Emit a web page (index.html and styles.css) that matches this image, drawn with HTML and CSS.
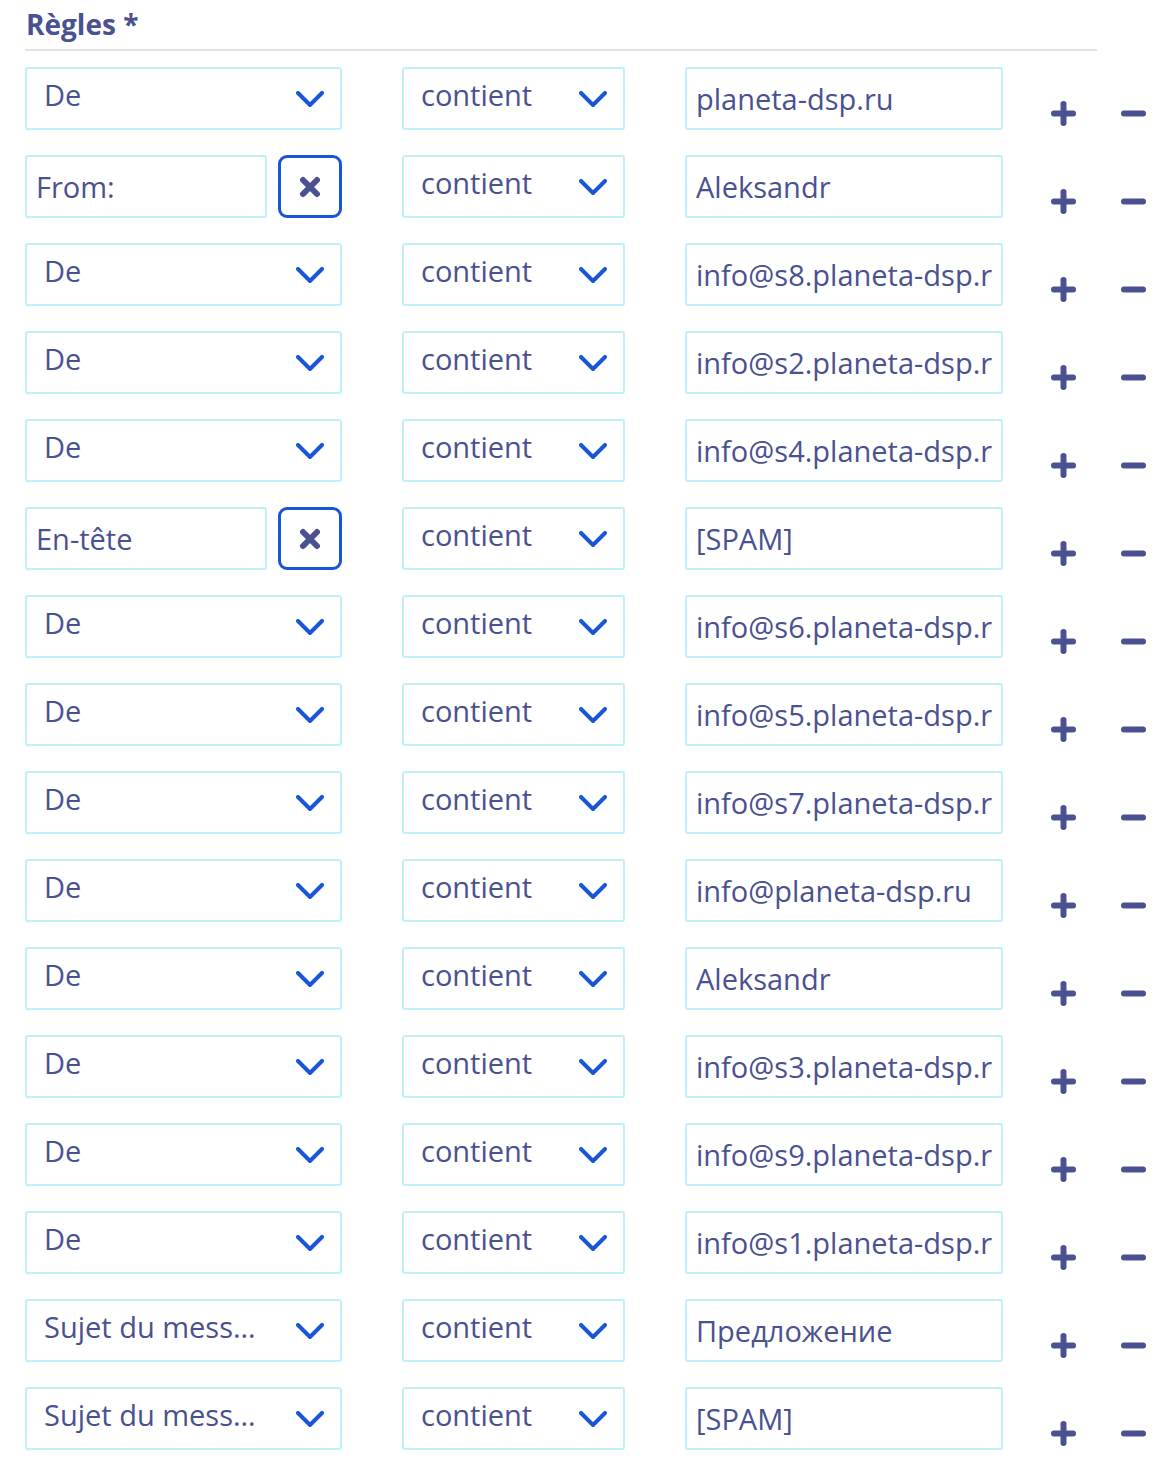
FILE: index.html
```html
<!DOCTYPE html>
<html lang="fr">
<head>
<meta charset="utf-8">
<title>Règles</title>
<link rel="stylesheet" href="styles.css">
</head>
<body>
<svg width="0" height="0" class="defs" aria-hidden="true">
  <defs>
    <symbol id="chev" viewBox="0 0 28 16"><polyline points="2,2 14,14 26,2" fill="none" stroke="currentColor" stroke-width="4" stroke-linecap="round" stroke-linejoin="round"/></symbol>
    <symbol id="plus" viewBox="0 0 25 25"><path d="M12.5 3V22M3 12.5H22" fill="none" stroke="currentColor" stroke-width="6" stroke-linecap="round"/></symbol>
    <symbol id="minus" viewBox="0 0 25 25"><path d="M3 12.5H22" fill="none" stroke="currentColor" stroke-width="6" stroke-linecap="round"/></symbol>
    <symbol id="cross" viewBox="0 0 22 22"><path d="M4 4L18 18M18 4L4 18" fill="none" stroke="currentColor" stroke-width="6" stroke-linecap="round"/></symbol>
  </defs>
</svg>
<section class="rules">
  <h2 class="rules-title">Règles *</h2>
  <div class="rule-list" id="rules"></div>
</section>
<script src="app.js"></script>
</body>
</html>
```
FILE: styles.css
```css
* { box-sizing: border-box; }
html, body { margin: 0; padding: 0; background: #fff; }
body {
  font-family: "Open Sans", Lato, sans-serif;
  color: #4a5190;
}
.defs { position: absolute; }
.rules { padding: 0 0 0 25px; }
.rules-title {
  margin: 0;
  width: 1072px;
  font-size: 28px;
  font-weight: 700;
  line-height: 49px;
  height: 51px;
  padding-left: 1px;
  border-bottom: 2px solid #e3e3e3;
}
.rule-list {
  display: flex;
  flex-direction: column;
  gap: 25px;
  padding-top: 16px;
}
.rule {
  display: grid;
  grid-template-columns: 317px 223px 318px auto;
  column-gap: 60px;
  height: 63px;
}
.box {
  height: 63px;
  border: 2px solid #bff0fc;
  border-radius: 3px;
  background: #fff;
  font-size: 29px;
  white-space: nowrap;
  overflow: hidden;
}
.select {
  display: flex;
  align-items: center;
  padding: 0 16px 8px 17px;
}
.select .label {
  flex: 1;
  min-width: 0;
  overflow: hidden;
  text-overflow: ellipsis;
}
.select .chev {
  width: 28px;
  height: 16px;
  color: #1856d8;
  flex: none;
  margin: 9px 0 0 30px;
}
.field {
  display: flex;
  align-items: center;
  padding: 0 9px 0 9px;
}
.field .value {
  flex: 1;
  min-width: 0;
  overflow: hidden;
  text-overflow: clip;
}
.custom { display: flex; gap: 11px; }
.custom .field { width: 242px; }
.clear {
  width: 64px;
  height: 63px;
  border: 3px solid #1856d8;
  border-radius: 9px;
  background: #fff;
  display: flex;
  align-items: center;
  justify-content: center;
  padding: 0;
  color: #4a5190;
}
.clear svg { width: 22px; height: 22px; }
.actions {
  display: flex;
  gap: 45px;
  padding-top: 34px;
  margin-left: -12px;
  color: #4a5190;
}
.actions svg { width: 25px; height: 25px; display: block; }
```
FILE: app.js
```js
// Rule rows: [field, custom header name or null, value]
const rules = [
  ["De", null, "planeta-dsp.ru"],
  [null, "From:", "Aleksandr"],
  ["De", null, "info@s8.planeta-dsp.ru"],
  ["De", null, "info@s2.planeta-dsp.ru"],
  ["De", null, "info@s4.planeta-dsp.ru"],
  [null, "En-tête", "[SPAM]"],
  ["De", null, "info@s6.planeta-dsp.ru"],
  ["De", null, "info@s5.planeta-dsp.ru"],
  ["De", null, "info@s7.planeta-dsp.ru"],
  ["De", null, "info@planeta-dsp.ru"],
  ["De", null, "Aleksandr"],
  ["De", null, "info@s3.planeta-dsp.ru"],
  ["De", null, "info@s9.planeta-dsp.ru"],
  ["De", null, "info@s1.planeta-dsp.ru"],
  ["Sujet du message", null, "Предложение"],
  ["Sujet du message", null, "[SPAM]"]
];

const chev = '<svg class="chev"><use href="#chev"/></svg>';
const sel = (t) => `<div class="box select"><span class="label">${t}</span>${chev}</div>`;
const field = (t) => `<div class="box field"><span class="value">${t}</span></div>`;

const list = document.getElementById("rules");
list.innerHTML = rules.map(([name, custom, value]) => {
  const first = custom
    ? `<div class="custom">${field(custom)}<button class="clear"><svg><use href="#cross"/></svg></button></div>`
    : sel(name);
  return `<div class="rule">${first}${sel("contient")}${field(value)}` +
    `<div class="actions"><svg><use href="#plus"/></svg><svg><use href="#minus"/></svg></div></div>`;
}).join("");
```
